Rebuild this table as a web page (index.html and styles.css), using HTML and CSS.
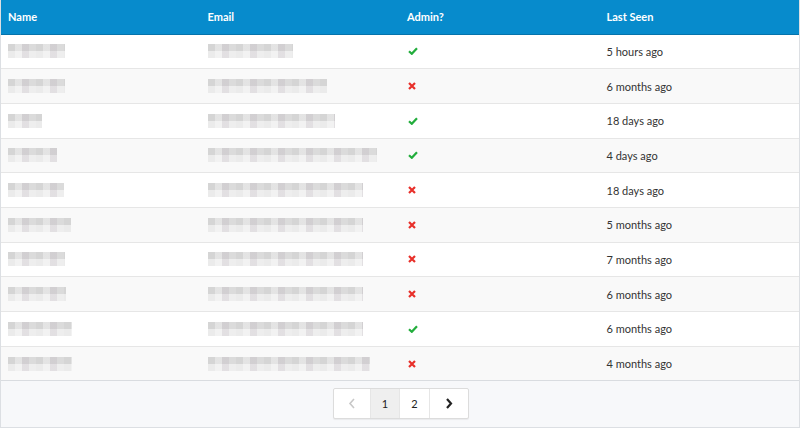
FILE: index.html
```html
<!DOCTYPE html>
<html>
<head>
<meta charset="utf-8">
<link rel="stylesheet" href="styles.css">
</head>
<body>
<div class="panel">
  <table class="users">
    <thead>
      <tr><th>Name</th><th>Email</th><th>Admin?</th><th>Last Seen</th></tr>
    </thead>
    <tbody>
      <tr><td><span class="blur" style="width:57px"></span></td><td><span class="blur" style="width:85px"></span></td><td><svg class="ok" width="10" height="8" viewBox="0 0 10 8"><path d="M1 4.2 L3.8 6.8 L9 1.2" fill="none" stroke="#22ad3c" stroke-width="2.2"/></svg></td><td>5 hours ago</td></tr>
      <tr><td><span class="blur" style="width:57px"></span></td><td><span class="blur" style="width:119px"></span></td><td><svg class="no" width="8" height="8" viewBox="0 0 8 8"><path d="M1 1 L7 7 M7 1 L1 7" stroke="#e8302a" stroke-width="2.2"/></svg></td><td>6 months ago</td></tr>
      <tr><td><span class="blur" style="width:34px"></span></td><td><span class="blur" style="width:127px"></span></td><td><svg class="ok" width="10" height="8" viewBox="0 0 10 8"><path d="M1 4.2 L3.8 6.8 L9 1.2" fill="none" stroke="#22ad3c" stroke-width="2.2"/></svg></td><td>18 days ago</td></tr>
      <tr><td><span class="blur" style="width:49px"></span></td><td><span class="blur" style="width:169px"></span></td><td><svg class="ok" width="10" height="8" viewBox="0 0 10 8"><path d="M1 4.2 L3.8 6.8 L9 1.2" fill="none" stroke="#22ad3c" stroke-width="2.2"/></svg></td><td>4 days ago</td></tr>
      <tr><td><span class="blur" style="width:56px"></span></td><td><span class="blur" style="width:155px"></span></td><td><svg class="no" width="8" height="8" viewBox="0 0 8 8"><path d="M1 1 L7 7 M7 1 L1 7" stroke="#e8302a" stroke-width="2.2"/></svg></td><td>18 days ago</td></tr>
      <tr><td><span class="blur" style="width:63px"></span></td><td><span class="blur" style="width:155px"></span></td><td><svg class="no" width="8" height="8" viewBox="0 0 8 8"><path d="M1 1 L7 7 M7 1 L1 7" stroke="#e8302a" stroke-width="2.2"/></svg></td><td>5 months ago</td></tr>
      <tr><td><span class="blur" style="width:57px"></span></td><td><span class="blur" style="width:155px"></span></td><td><svg class="no" width="8" height="8" viewBox="0 0 8 8"><path d="M1 1 L7 7 M7 1 L1 7" stroke="#e8302a" stroke-width="2.2"/></svg></td><td>7 months ago</td></tr>
      <tr><td><span class="blur" style="width:58px"></span></td><td><span class="blur" style="width:155px"></span></td><td><svg class="no" width="8" height="8" viewBox="0 0 8 8"><path d="M1 1 L7 7 M7 1 L1 7" stroke="#e8302a" stroke-width="2.2"/></svg></td><td>6 months ago</td></tr>
      <tr><td><span class="blur" style="width:64px"></span></td><td><span class="blur" style="width:155px"></span></td><td><svg class="ok" width="10" height="8" viewBox="0 0 10 8"><path d="M1 4.2 L3.8 6.8 L9 1.2" fill="none" stroke="#22ad3c" stroke-width="2.2"/></svg></td><td>6 months ago</td></tr>
      <tr><td><span class="blur" style="width:64px"></span></td><td><span class="blur" style="width:162px"></span></td><td><svg class="no" width="8" height="8" viewBox="0 0 8 8"><path d="M1 1 L7 7 M7 1 L1 7" stroke="#e8302a" stroke-width="2.2"/></svg></td><td>4 months ago</td></tr>
    </tbody>
  </table>
  <div class="footer">
    <div class="pager">
      <span class="pg prev"><svg width="8" height="11" viewBox="0 0 8 11"><path d="M6 1 L2 5.5 L6 10" fill="none" stroke="#c8c8c8" stroke-width="1.6"/></svg></span>
      <span class="pg num active">1</span>
      <span class="pg num">2</span>
      <span class="pg next"><svg width="8" height="11" viewBox="0 0 8 11"><path d="M2 1 L6 5.5 L2 10" fill="none" stroke="#222" stroke-width="2.2"/></svg></span>
    </div>
  </div>
</div>
</body>
</html>
```
FILE: styles.css
```css
html, body {
  margin: 0;
  padding: 0;
  background: #ffffff;
}
body {
  font-family: Lato, "Open Sans", sans-serif;
  font-size: 11px;
  color: #333;
}
.panel {
  width: 800px;
  height: 428px;
  box-sizing: border-box;
  border: 1px solid #dcdfe3;
  border-top: none;
  display: flex;
  flex-direction: column;
}
.users {
  width: 100%;
  border-collapse: collapse;
  table-layout: fixed;
}
.users th {
  background: #078bcc;
  color: #fff;
  font-weight: 700;
  text-align: left;
  height: 34px;
  padding: 0 8px 1px 7px;
  border-bottom: 1px solid #0573ab;
  box-sizing: border-box;
}
.users td {
  height: 34.7px;
  padding: 0 8px 0 7px;
  border-bottom: 1px solid #e6e6e6;
  box-sizing: border-box;
  vertical-align: middle;
}
.users tbody tr:nth-child(even) td {
  background: #f9f9f9;
}
.users tbody tr:last-child td {
  border-bottom: 1px solid #d9dce0;
}
.blur {
  display: block;
  height: 14px;
  background:
    repeating-linear-gradient(90deg, rgba(255,255,255,0) 0 7px, rgba(255,255,255,0.35) 7px 14px, rgba(200,190,200,0.25) 14px 21px, rgba(255,255,255,0.15) 21px 28px),
    linear-gradient(180deg, #d5d5d5 0 7px, #ebebeb 7px 14px);
}
.ok, .no {
  display: block;
  margin-left: 1px;
}
.footer {
  flex: 1;
  background: #f7f8fa;
  display: flex;
  justify-content: center;
  align-items: flex-start;
  padding-top: 7px;
  padding-left: 2px;
}
.pager {
  display: flex;
  border: 1px solid #dcdcdc;
  border-radius: 2px;
  background: #fff;
  box-shadow: 0 1px 1px rgba(0,0,0,0.06);
  height: 29px;
}
.pg {
  display: flex;
  align-items: center;
  justify-content: center;
  color: #222;
  font-size: 11px;
}
.pg + .pg {
  border-left: 1px solid #e6e6e6;
}
.prev { width: 36px; }
.num { width: 28px; }
.num + .num { width: 29px; }
.next { width: 38px; }
.active { background: #efefef; }
```
